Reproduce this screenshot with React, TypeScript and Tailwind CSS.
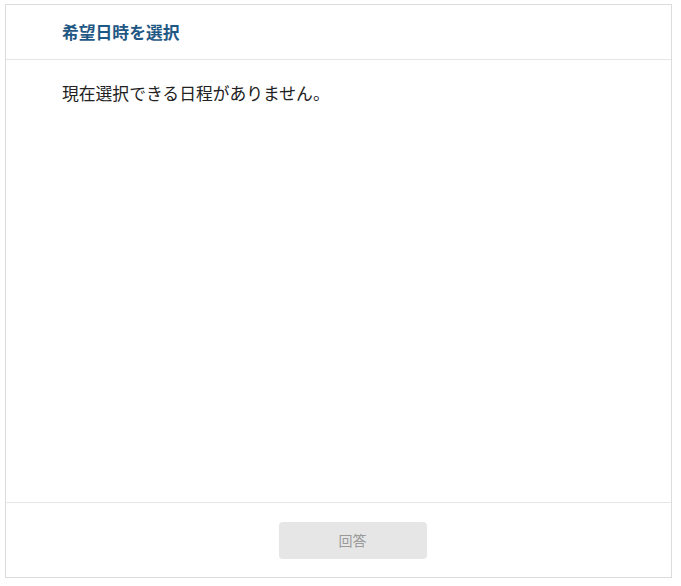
export default function App() {
  return (
    <div
      className="min-h-[586px] bg-white pl-[5px] pt-[4px] pr-[9px] pb-[8px]"
      style={{ fontFamily: '"Noto Sans CJK JP", "Noto Sans", sans-serif' }}
    >
      <div className="flex h-[574px] flex-col border border-[#dcdcdc] bg-white">
        {/* Header */}
        <div className="flex h-[55px] items-center border-b border-[#e6e6e6] pl-[56px]">
          <h2 className="text-[16.8px] font-bold leading-none text-[#1f5884]">希望日時を選択</h2>
        </div>

        {/* Body */}
        <div className="flex-1 pl-[56px] pt-[21px]">
          <p className="text-[16.8px] leading-[24px] text-[#222]">現在選択できる日程がありません。</p>
        </div>

        {/* Footer */}
        <div className="flex h-[75px] items-center justify-center border-t border-[#e6e6e6] pl-[28px]">
          <button
            disabled
            className="h-[37px] w-[148px] rounded-[4px] bg-[#e6e6e6] text-[14px] text-[#9a9a9a]"
          >
            回答
          </button>
        </div>
      </div>
    </div>
  )
}
